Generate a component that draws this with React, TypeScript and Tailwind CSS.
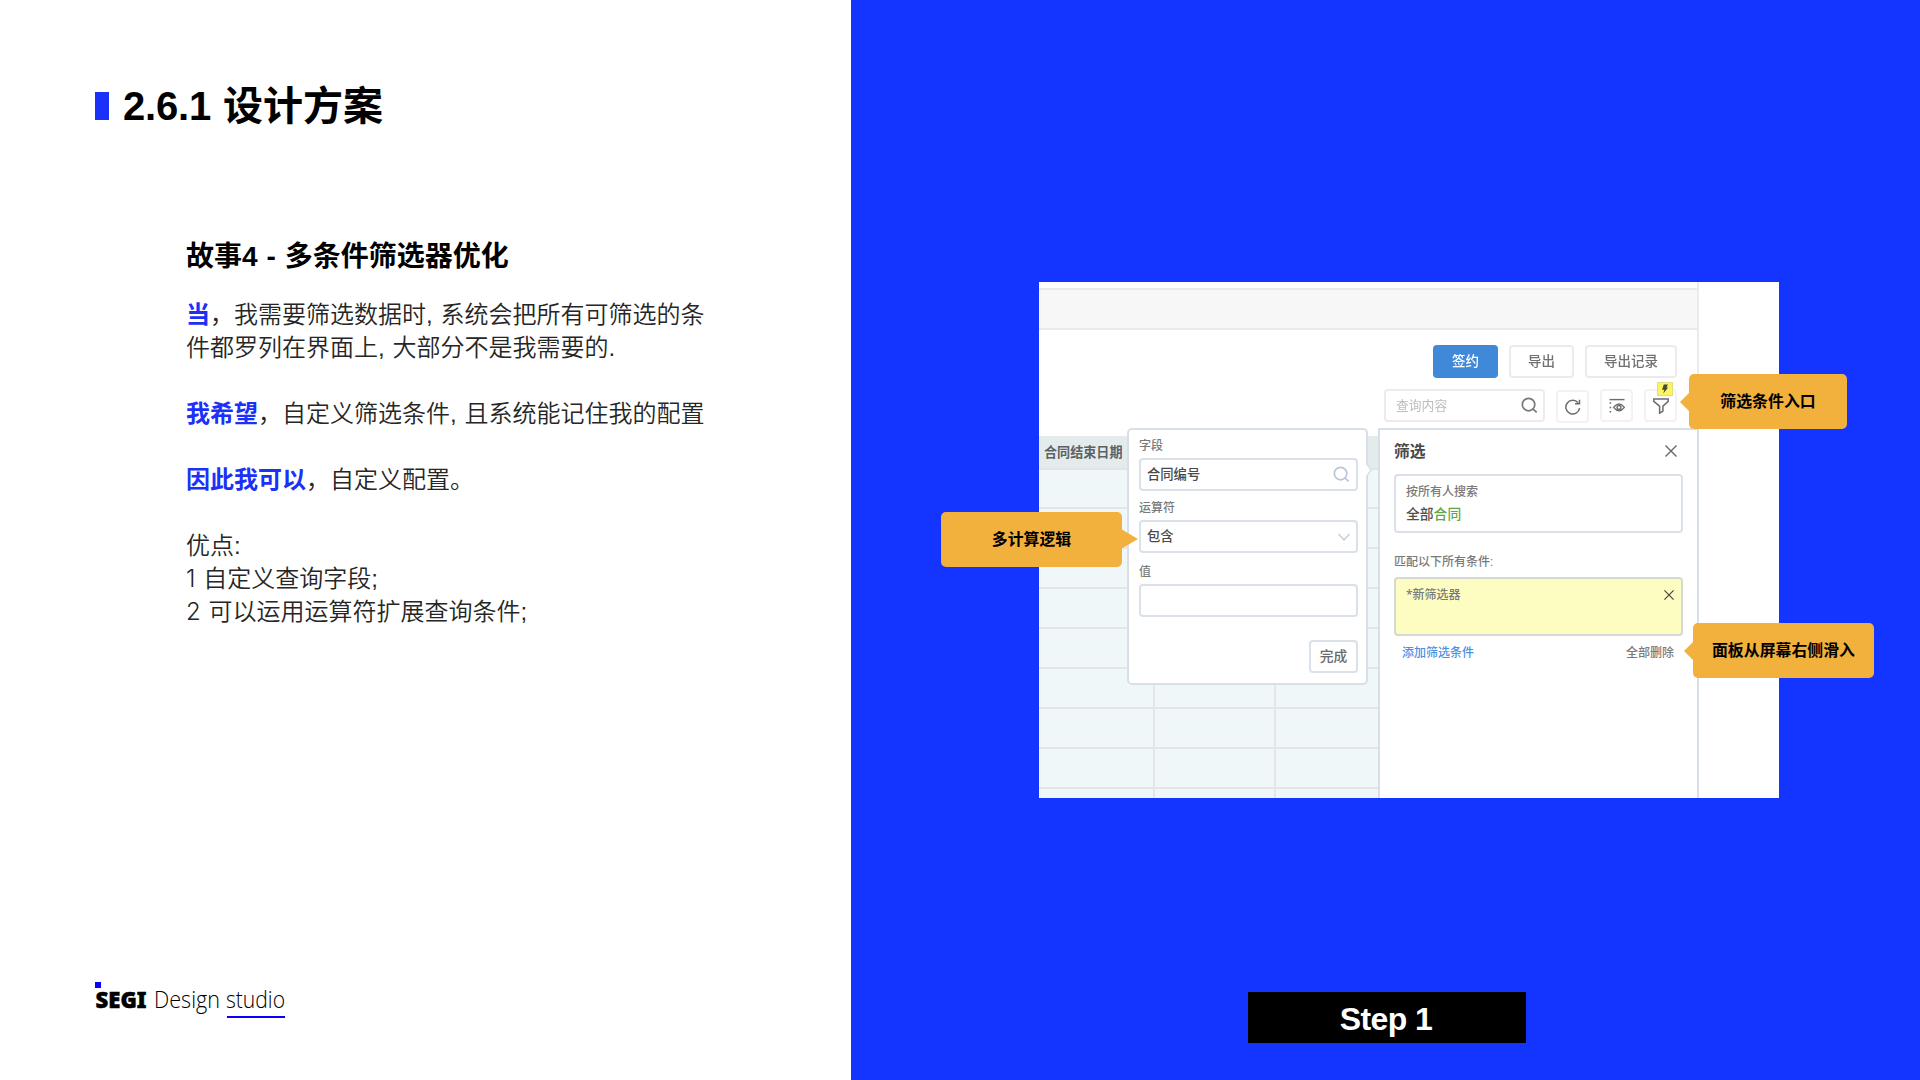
import type { ReactNode } from 'react';

const FONT = "font-['Liberation_Sans','Noto_Sans_CJK_SC',sans-serif]";

function SearchIcon({ className }: { className: string }) {
  return (
    <svg viewBox="0 0 18 18" className={className} fill="none" stroke="currentColor" strokeWidth="1.8">
      <circle cx="8" cy="8" r="6.6" />
      <path d="M12.8 12.8 L16.6 16.4" />
    </svg>
  );
}

function CloseIcon({ className }: { className: string }) {
  return (
    <svg viewBox="0 0 12 12" className={className} fill="none" stroke="currentColor" strokeWidth="1.4">
      <path d="M0.5 0.5 L11.5 11.5 M11.5 0.5 L0.5 11.5" />
    </svg>
  );
}

function IconButton({ children, className = '' }: { children: ReactNode; className?: string }) {
  return (
    <div className={`relative flex h-[33px] w-[33px] items-center justify-center rounded border-2 border-[#f2f2f2] bg-white text-[#6c6c6c] ${className}`}>
      {children}
    </div>
  );
}

function Field({ children, className = '' }: { children?: ReactNode; className?: string }) {
  return (
    <div className={`flex h-[33px] items-center justify-between rounded border-2 border-[#dbe1e9] bg-white text-[13.3px] font-medium text-[#4a4a4a] ${className}`}>
      {children}
    </div>
  );
}

function Toolbar() {
  return (
    <>
      <div className="mt-[15px] flex justify-end gap-[11px] pr-5 text-[13.5px] font-medium">
        <div className="flex h-[33px] w-[65px] items-center justify-center rounded bg-[#4088d8] pt-px text-white">签约</div>
        <div className="flex h-[33px] w-[65px] items-center justify-center rounded border-2 border-[#ebebeb] pt-px text-[#707070]">导出</div>
        <div className="flex h-[33px] w-[92px] items-center justify-center rounded border-2 border-[#ebebeb] pt-px text-[#707070]">导出记录</div>
      </div>
      <div className="mt-[11px] flex justify-end gap-[11px] pr-5">
        <div className="flex h-[33px] w-[161px] items-center justify-between rounded border-2 border-[#ececec] pl-[10px] pr-[5px] text-[12.8px] text-[#bdbdbd]">
          查询内容
          <SearchIcon className="size-[17px] text-[#777]" />
        </div>
        <IconButton className="top-px">
          <svg viewBox="0 0 16 16" className="size-4" fill="none" stroke="currentColor" strokeWidth="1.5">
            <path d="M14.6 9.2 A6.9 6.9 0 1 1 13.2 3.9" />
            <path d="M14.5 0.8 V4.8 H10" />
          </svg>
        </IconButton>
        <IconButton>
          <svg viewBox="0 0 16 16" className="size-4" fill="none" stroke="currentColor" strokeWidth="1.4">
            <path d="M0.5 1.6 H15.5" strokeWidth="1.4" />
            <path d="M0.6 5 H2.2 M0.6 9.4 H2.2 M0.6 13.8 H2.2" strokeWidth="1.5" />
            <path d="M4.6 9.4 Q10 2.6 15.4 9.4 Q10 16.2 4.6 9.4 Z" />
            <circle cx="10" cy="9.4" r="1.9" />
          </svg>
        </IconButton>
        <IconButton>
          <svg viewBox="0 0 16 16" className="size-4" fill="none" stroke="currentColor" strokeWidth="1.5">
            <path d="M0.8 1 H15.2 V3.4 L9.9 8.2 V13 L6.6 15.2 V8.2 L0.8 3.4 Z" />
          </svg>
          <div className="absolute -top-[9px] left-[11px] flex h-[14px] w-4 items-center justify-center border border-[#e2dd80] bg-[#fcf562]">
            <svg viewBox="0 0 8 10" className="h-[10px] w-2 shrink-0" fill="#444">
              <path d="M2.8 0.6 H7 L5.4 3.6 H7.2 L2.2 9.6 L3.4 5.8 H1 Z" />
            </svg>
          </div>
        </IconButton>
      </div>
    </>
  );
}

function DataTable() {
  const rows = [0, 1, 2, 3, 4, 5, 6, 7, 8];
  return (
    <div className="mt-[14px] min-h-0 grow overflow-hidden">
      <div className="flex h-[34px] items-center border-b-2 border-[#dfe4e6] bg-[#e4ebed] pl-[5px] pt-[2px] text-[13.1px] font-bold text-[#5c6264]">
        合同结束日期
      </div>
      {rows.map((r) => (
        <div key={r} className={`${r === 0 ? 'h-[39px]' : 'h-10'} grid grid-cols-[116px_121px_1fr] border-b-2 border-[#e2e6e9] bg-[#eff7f9]`}>
          <div className="border-r-2 border-[#e2e6e9]" />
          <div className="border-r-2 border-[#e2e6e9]" />
          <div />
        </div>
      ))}
    </div>
  );
}

function ConditionPopover() {
  return (
    <div className="absolute left-[88px] top-[146px] h-[257px] w-[241px] rounded-[5px] border-2 border-[#d9dfe7] bg-white pl-[10px] pr-[8px] text-[12px] font-medium text-[#7a7a7a]">
      <div className="mt-[7px] leading-[18px]">字段</div>
      <Field className="mt-[3px] pl-[6px] pr-[6px]">
        合同编号
        <SearchIcon className="size-[17px] text-[#b9c6d8]" />
      </Field>
      <div className="mt-[8px] leading-[18px]">运算符</div>
      <Field className="mt-[3px] pl-[6px] pr-[6px]">
        包含
        <svg viewBox="0 0 12 8" className="h-2 w-3" fill="none" stroke="#c3ccd9" strokeWidth="1.4">
          <path d="M0.5 1 L6 7 L11.5 1" />
        </svg>
      </Field>
      <div className="mt-[10px] leading-[18px]">值</div>
      <Field className="mt-[3px]" />
      <div className="mt-[23px] flex justify-end">
        <div className="flex h-[33px] w-[49px] items-center justify-center rounded border-2 border-[#dbe1e9] pt-px text-[13.8px] text-[#6a6a6a]">完成</div>
      </div>
      <svg viewBox="0 0 7 14" className="absolute -right-[6px] top-[33px] h-[14px] w-[7px]">
        <path d="M0 0 L2 1 L6 7 L2 13 L0 14 Z" fill="#fff" />
        <path d="M1.5 0.5 L6 7 L1.5 13.5" fill="none" stroke="#d9dfe7" strokeWidth="1.4" />
      </svg>
    </div>
  );
}

function FilterPanel() {
  return (
    <div className="absolute left-[339px] top-[146px] h-[370px] w-[321px] border-x-2 border-t-2 border-[#d9dfe7] bg-white px-[14px] text-[12px] font-medium text-[#7a7a7a]">
      <div className="mt-[9px] flex h-6 items-center justify-between pr-[6px]">
        <div className="pt-px text-[15.8px] font-bold text-[#484848]">筛选</div>
        <CloseIcon className="size-3 text-[#666]" />
      </div>
      <div className="mt-[11px] h-[59px] rounded border-2 border-[#dbe1e9] px-[10px]">
        <div className="mt-[7px] leading-[18px]">按所有人搜索</div>
        <div className="mt-[4px] text-[13.8px] leading-5 text-[#505050]">
          全部<span className="text-[#5fa745]">合同</span>
        </div>
      </div>
      <div className="mt-[20px] leading-[18px]">匹配以下所有条件:</div>
      <div className="mt-[6px] flex h-[59px] items-start justify-between rounded border-2 border-[#d5d9d5] bg-[#fefdc1] pl-[10px] pr-[7px]">
        <div className="mt-[7px] leading-[18px]"><span className="font-['Noto_Sans',sans-serif]">*</span>新筛选器</div>
        <CloseIcon className="mt-[11px] size-[10px] text-[#444]" />
      </div>
      <div className="mt-[8px] flex justify-between pl-2 pr-[9px] leading-[18px]">
        <span className="text-[#4a90e2]">添加筛选条件</span>
        <span>全部删除</span>
      </div>
    </div>
  );
}

function Callout({ side, className, children }: { side: 'left' | 'right'; className: string; children: ReactNode }) {
  return (
    <div className={`absolute flex h-[55px] items-center justify-center rounded-[5px] bg-[#f2b03d] pt-px text-[15.9px] font-bold text-black ${className}`}>
      {side === 'left' ? (
        <svg viewBox="0 0 10 20" className="absolute -left-[9px] top-[18px] h-5 w-[10px]" fill="#f2b03d">
          <path d="M0 10 L10 0 V20 Z" />
        </svg>
      ) : (
        <svg viewBox="0 0 17 20" className="absolute -right-4 top-[17px] h-5 w-[17px]" fill="#f2b03d">
          <path d="M17 10 L0 0 V20 Z" />
        </svg>
      )}
      {children}
    </div>
  );
}

function Logo() {
  return (
    <svg viewBox="0 0 200 44" className="h-11 w-[200px]">
      <rect x="0" y="2" width="6" height="6" fill="#0a00ff" />
      <text x="0.5" y="28" textLength="51" lengthAdjust="spacingAndGlyphs" stroke="#000" strokeWidth="0.5" className="font-['Noto_Sans','Open_Sans',sans-serif] text-[22px] font-black">SEGI</text>
      <text x="59" y="28" textLength="66" lengthAdjust="spacingAndGlyphs" className="font-['Open_Sans','Noto_Sans',sans-serif] text-[23px] font-light">Design</text>
      <text x="131" y="28" textLength="59" lengthAdjust="spacingAndGlyphs" className="font-['Open_Sans','Noto_Sans',sans-serif] text-[23px] font-light">studio</text>
      <rect x="132" y="36" width="58" height="2" fill="#0a00ff" />
    </svg>
  );
}

function Lead({ children }: { children: ReactNode }) {
  return <span className="font-bold text-[#1b30f9]">{children}</span>;
}

function Num({ children }: { children: ReactNode }) {
  return <span className="font-['Inter',sans-serif] font-light">{children}</span>;
}

export default function App() {
  return (
    <div className={`flex h-[1080px] w-[1920px] overflow-hidden bg-white ${FONT}`}>
      <section className="flex w-[851px] shrink-0 flex-col pl-[95px]">
        <h1 className="mt-[76px] flex h-[60px] items-center whitespace-pre text-[40px] font-bold text-black">
          <span className="mr-[14px] h-7 w-[14px] bg-[#1b30f9]" />
          <span className="mr-[12px] tracking-[-0.2px]">2.6.1</span>
          <span>设计方案</span>
        </h1>
        <div className="pl-[91px]">
          <h2 className="mt-[101px] h-10 whitespace-pre text-[28px] font-bold leading-10 text-black [word-spacing:1.2px]">故事4 - 多条件筛选器优化</h2>
          <div className="mt-[21px] whitespace-pre text-[24px] font-[350] leading-[33px] text-[#262626] [word-spacing:1.2px]">
            <p><Lead>当</Lead>，我需要筛选数据时, 系统会把所有可筛选的条</p>
            <p>件都罗列在界面上, 大部分不是我需要的.</p>
            <p className="mt-[33px]"><Lead>我希望</Lead>，自定义筛选条件, 且系统能记住我的配置</p>
            <p className="mt-[33px]"><Lead>因此我可以</Lead>，自定义配置。</p>
            <p className="mt-[33px]">优点:</p>
            <p><Num>1</Num> 自定义查询字段;</p>
            <p><Num>2</Num> 可以运用运算符扩展查询条件;</p>
          </div>
        </div>
        <div className="mb-[56px] mt-auto h-11">
          <Logo />
        </div>
      </section>

      <section className="flex grow flex-col bg-[#1434ff]">
        <div className="relative ml-[188px] mt-[282px] h-[516px] w-[740px]">
          <div className="relative h-full w-full overflow-hidden bg-white">
            <div className="relative h-full w-full blur-[0.45px]">
              <div className="flex h-full w-[660px] flex-col border-r-2 border-[#e9ebee]">
                <div className="mt-[6px] h-[42px] shrink-0 border-y-2 border-[#e9eaeb] bg-[#f7f7f7]" />
                <Toolbar />
                <DataTable />
              </div>
              <ConditionPopover />
              <FilterPanel />
            </div>
          </div>
          <Callout side="left" className="left-[650px] top-[92px] w-[158px]">筛选条件入口</Callout>
          <Callout side="right" className="left-[-98px] top-[230px] w-[181px]">多计算逻辑</Callout>
          <Callout side="left" className="left-[654px] top-[341px] w-[181px]">面板从屏幕右侧滑入</Callout>
        </div>
        <div className="ml-[397px] mt-[194px] flex h-[51px] w-[278px] items-center justify-center bg-black pr-[2px] pt-[2px] text-[32px] font-bold tracking-[-0.6px] text-white">
          Step 1
        </div>
      </section>
    </div>
  );
}
